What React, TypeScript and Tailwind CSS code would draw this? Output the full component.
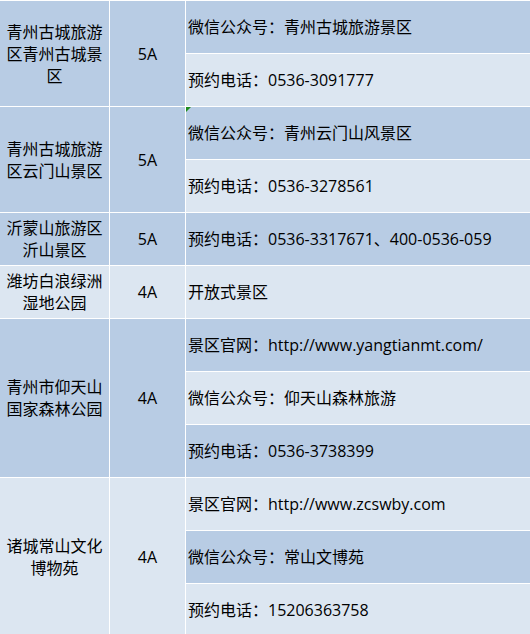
import React from 'react';

type Group = {
  name: string;
  level: string;
  items: string[];
};

const groups: Group[] = [
  { name: '青州古城旅游区青州古城景区', level: '5A', items: ['微信公众号：青州古城旅游景区', '预约电话：0536-3091777'] },
  { name: '青州古城旅游区云门山景区', level: '5A', items: ['微信公众号：青州云门山风景区', '预约电话：0536-3278561'] },
  { name: '沂蒙山旅游区沂山景区', level: '5A', items: ['预约电话：0536-3317671、400-0536-059'] },
  { name: '潍坊白浪绿洲湿地公园', level: '4A', items: ['开放式景区'] },
  {
    name: '青州市仰天山国家森林公园',
    level: '4A',
    items: ['景区官网：http://www.yangtianmt.com/', '微信公众号：仰天山森林旅游', '预约电话：0536-3738399'],
  },
  {
    name: '诸城常山文化博物苑',
    level: '4A',
    items: ['景区官网：http://www.zcswby.com', '微信公众号：常山文博苑', '预约电话：15206363758'],
  },
];

const dark = 'bg-[#b8cce4]';
const light = 'bg-[#dce6f1]';

function App() {
  // stripes run down the third column, merged cells take the colour of their first line
  let line = 0;
  return (
    <div
      className="w-[530px] h-[634px] overflow-hidden bg-white pt-px flex flex-col gap-px text-[16px] text-black"
      style={{ fontFamily: '"Open Sans", "Noto Sans CJK SC", sans-serif' }}
    >
      {groups.map((g, gi) => {
        const first = line;
        const shade = first % 2 === 0 ? dark : light;
        line += g.items.length;
        return (
          <div key={gi} className="flex gap-px shrink-0">
            <div className={`w-[109px] shrink-0 flex items-center justify-center text-center leading-[22px] px-[2px] ${shade}`}>
              {g.name}
            </div>
            <div className={`w-[75px] shrink-0 flex items-center justify-center ${shade}`}>{g.level}</div>
            <div className="flex-1 flex flex-col gap-px">
              {g.items.map((it, ii) => (
                <div
                  key={ii}
                  className={`relative h-[52px] flex items-center pl-[2px] whitespace-nowrap ${(first + ii) % 2 === 0 ? dark : light}`}
                >
                  {gi === 1 && ii === 0 && (
                    <span className="absolute left-0 top-0 w-0 h-0 border-t-[5px] border-r-[5px] border-t-[#1e8c1e] border-r-transparent" />
                  )}
                  {it}
                </div>
              ))}
            </div>
          </div>
        );
      })}
    </div>
  );
}

export default App;
